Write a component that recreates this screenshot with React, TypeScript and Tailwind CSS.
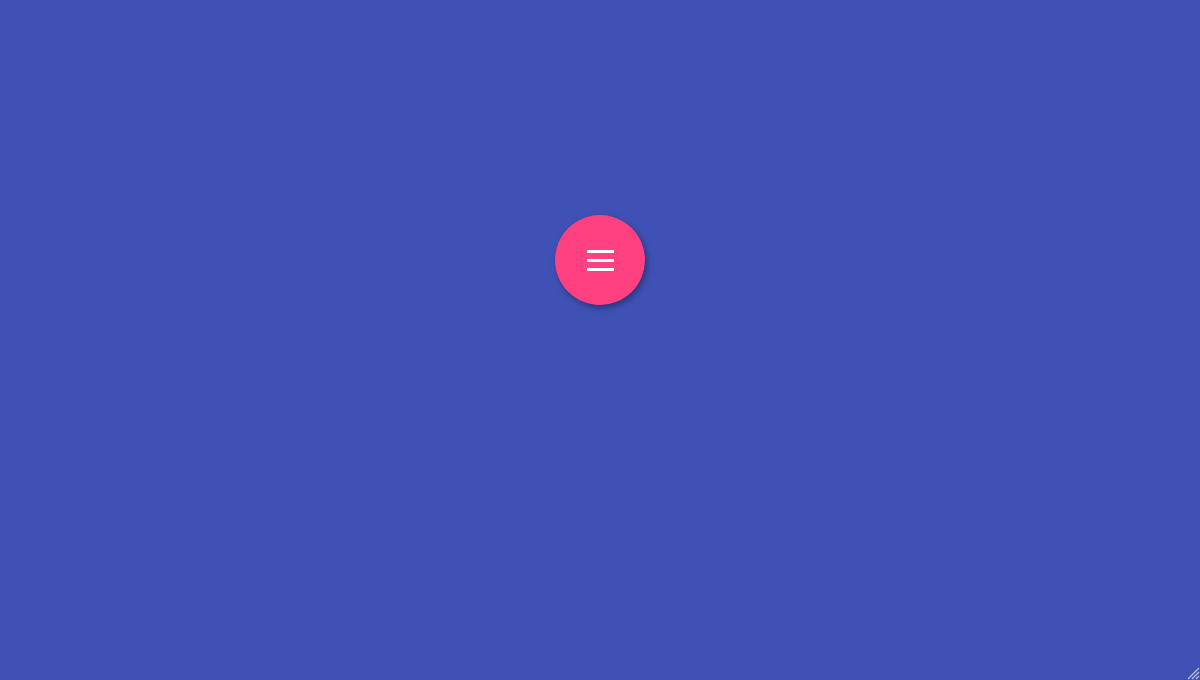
export default function App() {
  return (
    <div className="relative h-[680px] w-full overflow-hidden bg-[#3f51b5] font-['Roboto',sans-serif]">
      <div className="flex justify-center pt-[215px]">
        <button
          aria-label="Open menu"
          className="flex h-[90px] w-[90px] cursor-pointer flex-col items-center justify-center gap-[6px] rounded-full bg-[#ff4081] shadow-[2px_3px_6px_rgba(0,0,0,0.35)]"
        >
          <span className="block h-[3px] w-[27px] bg-white" />
          <span className="block h-[3px] w-[27px] bg-white" />
          <span className="block h-[3px] w-[27px] bg-white" />
        </button>
      </div>

      {/* resize grip */}
      <svg
        className="absolute bottom-0 right-0"
        width="14"
        height="14"
        viewBox="0 0 14 14"
      >
        <path d="M13 2L2 13M13 6L6 13M13 10L10 13" stroke="#b9bfd9" strokeWidth="1.2" />
      </svg>
    </div>
  );
}
